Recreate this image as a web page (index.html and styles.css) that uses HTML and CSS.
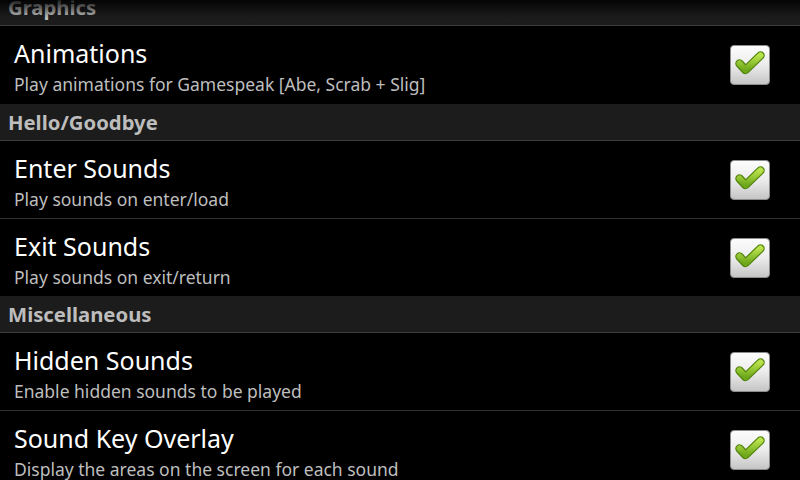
FILE: index.html
```html
<!DOCTYPE html>
<html lang="en">
<head>
    <meta charset="UTF-8">
    <title>Sound Settings</title>
    <link rel="stylesheet" href="styles.css">
</head>
<body>
    <div class="top-fade"></div>

    <main class="prefs">
        <div class="category cut">Graphics</div>
        <div class="pref last">
            <div class="pref-text">
                <div class="title">Animations</div>
                <div class="summary">Play animations for Gamespeak [Abe, Scrab + Slig]</div>
            </div>
            <svg class="check" viewBox="0 0 40 40"><use href="#checkbox"/></svg>
        </div>

        <div class="category">Hello/Goodbye</div>
        <div class="pref">
            <div class="pref-text">
                <div class="title">Enter Sounds</div>
                <div class="summary">Play sounds on enter/load</div>
            </div>
            <svg class="check" viewBox="0 0 40 40"><use href="#checkbox"/></svg>
        </div>
        <div class="pref last">
            <div class="pref-text">
                <div class="title">Exit Sounds</div>
                <div class="summary">Play sounds on exit/return</div>
            </div>
            <svg class="check" viewBox="0 0 40 40"><use href="#checkbox"/></svg>
        </div>

        <div class="category">Miscellaneous</div>
        <div class="pref">
            <div class="pref-text">
                <div class="title">Hidden Sounds</div>
                <div class="summary">Enable hidden sounds to be played</div>
            </div>
            <svg class="check" viewBox="0 0 40 40"><use href="#checkbox"/></svg>
        </div>
        <div class="pref">
            <div class="pref-text">
                <div class="title">Sound Key Overlay</div>
                <div class="summary">Display the areas on the screen for each sound</div>
            </div>
            <svg class="check" viewBox="0 0 40 40"><use href="#checkbox"/></svg>
        </div>
    </main>

    <!-- shared checkbox drawing -->
    <svg width="0" height="0" class="defs">
        <defs>
            <linearGradient id="boxFill" x1="0" y1="0" x2="0" y2="1">
                <stop offset="0" stop-color="#fdfdfd"/>
                <stop offset="0.5" stop-color="#ececec"/>
                <stop offset="1" stop-color="#c4c4c4"/>
            </linearGradient>
            <linearGradient id="tickFill" x1="0" y1="0" x2="0" y2="1">
                <stop offset="0" stop-color="#b8e24c"/>
                <stop offset="1" stop-color="#6ea81a"/>
            </linearGradient>
            <g id="checkbox">
                <rect x="0.5" y="0.5" width="39" height="39" rx="3.5" fill="url(#boxFill)" stroke="#8c8c8c"/>
                <path d="M9.5 18.5 L15.5 25 L30.5 10.5" fill="none" stroke="#52840f" stroke-width="8.5" stroke-linecap="round" stroke-linejoin="round"/>
                <path d="M9.5 18.5 L15.5 25 L30.5 10.5" fill="none" stroke="url(#tickFill)" stroke-width="6" stroke-linecap="round" stroke-linejoin="round"/>
            </g>
        </defs>
    </svg>
</body>
</html>
```

FILE: styles.css
```css
* {
    box-sizing: border-box;
}

html, body {
    margin: 0;
    height: 100%;
    background: #000;
    overflow: hidden;
}

body {
    font-family: "Noto Sans", "DejaVu Sans", sans-serif;
    position: relative;
}

.top-fade {
    position: absolute;
    top: 0;
    left: 0;
    right: 0;
    height: 18px;
    background: linear-gradient(rgba(0, 0, 0, .85), rgba(0, 0, 0, 0));
    z-index: 2;
}

.defs {
    position: absolute;
}

.category {
    height: 37px;
    padding-left: 8px;
    line-height: 36px;
    background: #1c1c1c;
    border-bottom: 1px solid #3d3d3d;
    color: #bdbdbd;
    font-size: 20.3px;
    font-weight: bold;
}

.category.cut {
    margin-top: -11px;
}

.pref {
    display: flex;
    align-items: center;
    height: 78px;
    padding: 0 30px 0 14px;
    border-bottom: 1px solid #303030;
}

.pref.last {
    border-bottom: 0;
    height: 77px;
}

.cut + .pref {
    height: 78px;
}

.pref-text {
    flex: 1;
    align-self: flex-start;
    padding-top: 12px;
}

.title {
    color: #fff;
    font-size: 25px;
    line-height: 30px;
}

.summary {
    margin-top: 4px;
    color: #bebebe;
    font-size: 17.5px;
    line-height: 24px;
}

.check {
    width: 40px;
    height: 40px;
}
```
